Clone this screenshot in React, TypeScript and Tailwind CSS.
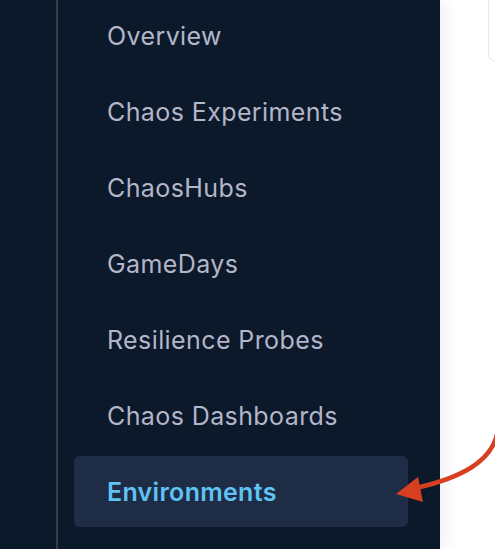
import React from 'react'

const items = [
  'Overview',
  'Chaos Experiments',
  'ChaosHubs',
  'GameDays',
  'Resilience Probes',
  'Chaos Dashboards',
  'Environments',
]

function Arrow() {
  return (
    <svg
      className="pointer-events-none absolute left-0 top-0 z-20"
      width="495"
      height="549"
      viewBox="0 0 495 549"
    >
      <path
        d="M 498 430 C 493 462, 460 478, 416 488"
        fill="none"
        stroke="#d63f1f"
        strokeWidth="4.5"
        strokeLinecap="round"
      />
      <polygon points="396,494 418,477 423,502" fill="#d63f1f" />
    </svg>
  )
}

export default function App() {
  const active = 'Environments'
  return (
    <div
      className="relative flex h-[549px] w-[495px] overflow-hidden bg-white"
      style={{ fontFamily: 'Inter, "Noto Sans", sans-serif' }}
    >
      <aside className="z-10 flex h-full w-[440px] shrink-0 bg-[#0b192b] shadow-[6px_0_14px_rgba(0,0,0,0.06)]">
        <div className="w-[56px] shrink-0" />
        <div className="h-full w-[2px] shrink-0 bg-[#343d4c]" />
        <nav className="flex flex-col gap-[5px] pl-[16px]">
          {items.map((item) => (
            <div
              key={item}
              className={
                item === active
                  ? 'flex h-[71px] w-[334px] items-center rounded-md bg-[#1f2c45] pl-[33px] pt-[2px] text-[25px] font-semibold tracking-[0.3px] text-[#5fc3f4]'
                  : 'flex h-[71px] w-[334px] items-center rounded-md pl-[33px] pt-[2px] text-[25px] tracking-[0.4px] text-[#b3b6c8]'
              }
            >
              {item}
            </div>
          ))}
        </nav>
      </aside>
      <main className="relative flex-1">
        <div className="absolute left-[48px] top-[-10px] h-[72px] w-[40px] rounded-lg border border-[#e6e7ea] bg-white" />
      </main>
      <Arrow />
    </div>
  )
}
